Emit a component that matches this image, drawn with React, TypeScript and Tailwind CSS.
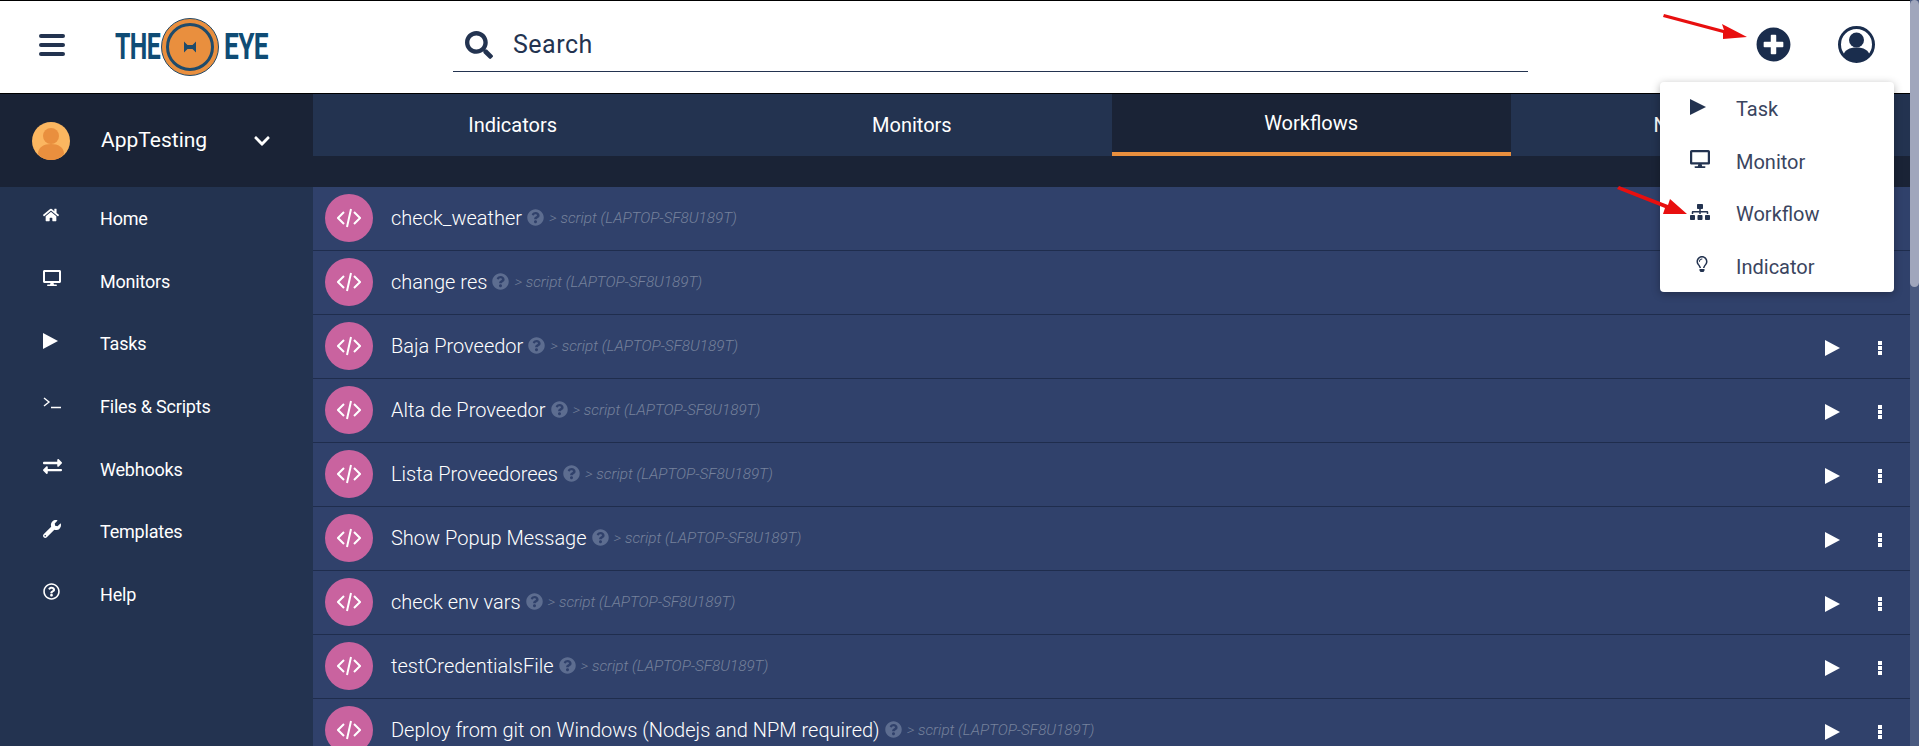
import { FaChevronDown, FaDesktop, FaExchangeAlt, FaHome, FaPlusCircle, FaQuestionCircle, FaRegLightbulb, FaRegQuestionCircle, FaSearch, FaSitemap, FaWrench } from "react-icons/fa";
import type { ReactNode } from "react";

const Play = ({ w, h }: { w: number; h: number }) => (
  <svg width={w} height={h} viewBox="0 0 15 16" preserveAspectRatio="none" fill="currentColor" className="block">
    <path d="M0 0l15 8-15 8z" />
  </svg>
);

const Terminal = () => (
  <svg width="18" height="12" viewBox="0 0 18 12" fill="none" stroke="currentColor" strokeWidth="1.4" className="block">
    <path d="M1 1l5 4-5 4M8 10.5h10" />
  </svg>
);

const nav: { label: string; icon: ReactNode }[] = [
  { label: "Home", icon: <FaHome className="text-[16px]" /> },
  { label: "Monitors", icon: <FaDesktop className="text-[18px]" /> },
  { label: "Tasks", icon: <Play w={15} h={16} /> },
  { label: "Files & Scripts", icon: <Terminal /> },
  { label: "Webhooks", icon: <FaExchangeAlt className="text-[19px]" /> },
  { label: "Templates", icon: <FaWrench className="text-[18px]" /> },
  { label: "Help", icon: <FaRegQuestionCircle className="text-[17px]" /> },
];

const tabs = ["Indicators", "Monitors", "Workflows", "Notifications"];

const scripts = [
  "check_weather",
  "change res",
  "Baja Proveedor",
  "Alta de Proveedor",
  "Lista Proveedorees",
  "Show Popup Message",
  "check env vars",
  "testCredentialsFile",
  "Deploy from git on Windows (Nodejs and NPM required)",
];

const menu: { label: string; icon: ReactNode }[] = [
  { label: "Task", icon: <Play w={16} h={16} /> },
  { label: "Monitor", icon: <FaDesktop className="text-[20px]" /> },
  { label: "Workflow", icon: <FaSitemap className="text-[20px]" /> },
  { label: "Indicator", icon: <FaRegLightbulb className="ml-[4px] text-[16px]" /> },
];

const Logo = () => (
  <div className="flex items-center font-bold text-[#0f4c75] text-[36px] leading-none">
    <span className="w-[46px] origin-left scale-x-[0.69] tracking-tight">THE</span>
    <svg width="58" height="58" viewBox="0 0 58 58" className="shrink-0">
      <circle cx="29" cy="29" r="28.5" fill="#e98f3e" stroke="#234a68" strokeWidth="1" />
      <circle cx="29" cy="29" r="22.5" fill="#e98f3e" stroke="#1f4b6b" strokeWidth="3" />
      <path d="M23 23.5l3.5 3.5h5l3.5-3.5v11l-3.5-3.5h-5l-3.5 3.5z" fill="#1f4b6b" />
    </svg>
    <span className="ml-[5px] w-[44px] origin-left scale-x-[0.73] tracking-tight">EYE</span>
  </div>
);

const ScriptRow = ({ name }: { name: string }) => (
  <div className="h-16 shrink-0 flex items-center pb-[2px] pl-3 pr-[28px] bg-[#30416b] border-b border-[#1f2d4d]">
    <div className="w-12 h-12 rounded-full bg-[#c9639f] flex items-center justify-center text-white">
      <svg width="24" height="20" viewBox="0 0 24 20" fill="none" stroke="currentColor" strokeWidth="2">
        <path d="M7 4l-6 6 6 6M17 4l6 6-6 6M14 1l-4 18" />
      </svg>
    </div>
    <span className="ml-[18px] text-[20px] font-light text-white">{name}</span>
    <FaQuestionCircle className="ml-[5px] text-[17px] text-[#5d6d90]" />
    <span className="ml-[5px] mt-[2px] text-[15.25px] italic font-light text-[#76819c]">&gt; script (LAPTOP-SF8U189T)</span>
    <div className="ml-auto mt-[5px] flex items-center gap-[38px] text-white">
      <Play w={15} h={16} />
      <div className="flex flex-col gap-px">
        <span className="w-1 h-1 bg-white" />
        <span className="w-1 h-1 bg-white" />
        <span className="w-1 h-1 bg-white" />
      </div>
    </div>
  </div>
);

export default function App() {
  return (
    <div className="relative h-[746px] w-full flex overflow-hidden bg-[#1a2336] font-['Roboto',sans-serif]">
      <div className="flex-1 min-w-0 flex flex-col">
        <header className="h-[94px] shrink-0 flex items-center bg-white border-y border-black">
          <div className="ml-[39px] -mt-1 w-[26px] flex flex-col gap-[5px]">
            <span className="h-1 rounded-sm bg-[#233350]" />
            <span className="h-1 rounded-sm bg-[#233350]" />
            <span className="h-1 rounded-sm bg-[#233350]" />
          </div>
          <div className="ml-[50px]">
            <Logo />
          </div>
          <div className="ml-[185px] w-[1075px] h-[53px] -mt-[3px] flex items-center gap-5 border-b border-[#233350] pl-3">
            <FaSearch className="text-[28px] text-[#233350]" />
            <span className="text-[25px] tracking-[0.5px] text-[#233350]">Search</span>
          </div>
          <div className="ml-[228px] -mt-[6px] flex items-center gap-[47px] text-[#1a2d4d]">
            <FaPlusCircle className="text-[35px]" />
            <svg width="37" height="37" viewBox="0 0 37 37" className="shrink-0">
              <circle cx="18.5" cy="18.5" r="17" fill="none" stroke="currentColor" strokeWidth="3" />
              <circle cx="18.5" cy="14" r="7.5" fill="currentColor" />
              <path d="M5.5 29c1-5 6-7.5 13-7.5s12 2.5 13 7.5c-3 4-8 6-13 6s-10-2-13-6z" fill="currentColor" />
            </svg>
          </div>
        </header>

        <div className="flex-1 min-h-0 flex">
          <aside className="w-[313px] shrink-0 flex flex-col bg-[#233350]">
            <div className="h-[93px] shrink-0 flex items-center pl-8 bg-[#1a2336] text-white">
              <svg width="38" height="38" viewBox="0 0 38 38">
                <circle cx="19" cy="19" r="19" fill="#fbb660" />
                <circle cx="19" cy="14" r="8" fill="#e98f3e" />
                <path d="M6 32c0-7 6-10 13-10s13 3 13 10c-3 4-8 6-13 6s-10-2-13-6z" fill="#e98f3e" />
              </svg>
              <span className="ml-[31px] text-[21px]">AppTesting</span>
              <FaChevronDown className="ml-[46px] text-[18px]" />
            </div>
            <nav className="flex flex-col">
              {nav.map((item) => (
                <div key={item.label} className="h-[62.7px] flex items-center pl-[43px] text-white">
                  <span className="w-[57px] -mt-[6px]">{item.icon}</span>
                  <span className="text-[18px] tracking-[-0.2px]">{item.label}</span>
                </div>
              ))}
            </nav>
          </aside>

          <main className="flex-1 min-w-0 flex flex-col">
            <div className="h-[62px] shrink-0 flex bg-[#233350]">
              {tabs.map((tab) => (
                <div
                  key={tab}
                  className={
                    tab === "Workflows"
                      ? "flex-1 flex items-center justify-center text-[20px] text-white bg-[#1a2336] border-b-4 border-[#e98f3e]"
                      : "flex-1 flex items-center justify-center text-[20px] text-white"
                  }
                >
                  {tab}
                </div>
              ))}
            </div>
            <div className="h-[31px] shrink-0 bg-[#1a2336]" />
            <div className="flex-1 min-h-0 flex flex-col overflow-hidden">
              {scripts.map((name) => (
                <ScriptRow key={name} name={name} />
              ))}
            </div>
          </main>
        </div>
      </div>

      <div className="w-[9px] shrink-0 bg-[#4a5a80]">
        <div className="h-[287px] rounded-md bg-[#a0a6bc]" />
      </div>

      <div className="absolute left-[1660px] top-[82px] w-[234px] h-[210px] flex flex-col rounded bg-white shadow-[0_2px_8px_rgba(0,0,0,0.3)]">
        {menu.map((item) => (
          <div key={item.label} className="h-[52.5px] flex items-center pl-[30px] text-[#3a4560]">
            <span className="w-[46px] -mt-[3px] text-[#233350]">{item.icon}</span>
            <span className="text-[20px] mt-[2px]">{item.label}</span>
          </div>
        ))}
      </div>

      <svg className="absolute left-[1660px] top-[12px]" width="90" height="28" viewBox="0 0 90 28">
        <path d="M4 2L64 18l-2-6 25 13-24 2 0-6L3 5z" fill="#e80f0f" />
      </svg>
      <svg className="absolute left-[1615px] top-[184px]" width="76" height="34" viewBox="0 0 76 34">
        <path d="M4 2L53 21l2-6 17 15-24 0 2-6L2 5z" fill="#e80f0f" />
      </svg>
    </div>
  );
}
